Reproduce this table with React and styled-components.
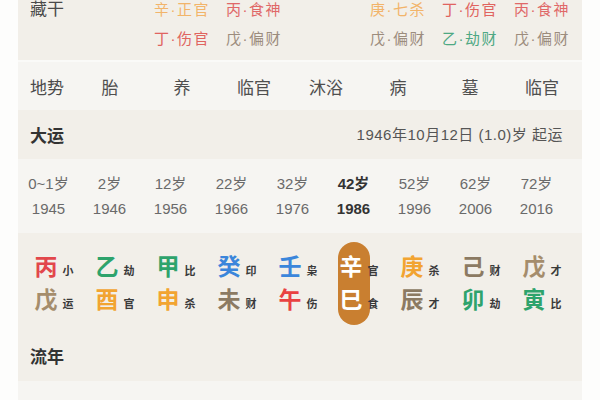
import styled, { createGlobalStyle } from "styled-components";

const GlobalStyle = createGlobalStyle`
  html, body {
    margin: 0;
    padding: 0;
    background: #fdfdfc;
    overflow: hidden;
  }
  body {
    font-family: "Liberation Sans", "Noto Sans CJK SC", sans-serif;
  }
`;

const DARK = "#f2efe9";
const LIGHT = "#f6f5f2";

//藏干（列の順番は地势と同じ）
const hidden = [
  [null, null],
  [
    { t: "辛·正官", c: "#f2b46a" },
    { t: "丁·伤官", c: "#e0645f" },
  ],
  [
    { t: "丙·食神", c: "#e06868" },
    { t: "戊·偏财", c: "#9c8c7d" },
  ],
  [null, null],
  [
    { t: "庚·七杀", c: "#f2b46a" },
    { t: "戊·偏财", c: "#9c8c7d" },
  ],
  [
    { t: "丁·伤官", c: "#e0645f" },
    { t: "乙·劫财", c: "#4ea883" },
  ],
  [
    { t: "丙·食神", c: "#e06868" },
    { t: "戊·偏财", c: "#9c8c7d" },
  ],
];

const terrain = ["胎", "养", "临官", "沐浴", "病", "墓", "临官"];

const dayun = [
  ["0~1岁", "1945"],
  ["2岁", "1946"],
  ["12岁", "1956"],
  ["22岁", "1966"],
  ["32岁", "1976"],
  ["42岁", "1986"],
  ["52岁", "1996"],
  ["62岁", "2006"],
  ["72岁", "2016"],
];

const RED = "#e2474b";
const GREEN = "#2ea36c";
const BLUE = "#3b86db";
const GOLD = "#f2a431";
const EARTH = "#8c7a62";
const SAND = "#a58d6c";

const pillars = [
  [{ g: "丙", s: "小", c: RED }, { g: "戊", s: "运", c: SAND }],
  [{ g: "乙", s: "劫", c: GREEN }, { g: "酉", s: "官", c: GOLD }],
  [{ g: "甲", s: "比", c: GREEN }, { g: "申", s: "杀", c: GOLD }],
  [{ g: "癸", s: "印", c: BLUE }, { g: "未", s: "财", c: EARTH }],
  [{ g: "壬", s: "枭", c: BLUE }, { g: "午", s: "伤", c: "#e94242" }],
  [{ g: "辛", s: "官", c: "#fff" }, { g: "巳", s: "食", c: "#fff" }],
  [{ g: "庚", s: "杀", c: GOLD }, { g: "辰", s: "才", c: EARTH }],
  [{ g: "己", s: "财", c: EARTH }, { g: "卯", s: "劫", c: GREEN }],
  [{ g: "戊", s: "才", c: SAND }, { g: "寅", s: "比", c: GREEN }],
];

const liunian = ["1986", "1987", "1988", "1989", "1990", "1991", "1992", "1993", "1994"];

const ACTIVE = 5;

export default function App() {
  return (
    <>
      <GlobalStyle />
      <Panel>
        {/* 藏干 */}
        <Section $tone="dark" $pad="0 0 11px" $line>
          {[0, 1].map((row) => (
            <HiddenRow key={row}>
              <RowLabel>{row === 0 ? "藏干" : ""}</RowLabel>
              {hidden.map((col, i) => (
                <HiddenCell key={i} $color={col[row] ? col[row].c : "inherit"}>
                  {col[row] ? col[row].t : ""}
                </HiddenCell>
              ))}
            </HiddenRow>
          ))}
        </Section>

        {/* 地势 */}
        <Section $tone="light">
          <TerrainRow>
            <RowLabel>地势</RowLabel>
            {terrain.map((t, i) => (
              <TerrainCell key={i}>{t}</TerrainCell>
            ))}
          </TerrainRow>
        </Section>

        {/* 大运 */}
        <Header>
          <HeaderTitle>大运</HeaderTitle>
          <HeaderNote>1946年10月12日 (1.0)岁 起运</HeaderNote>
        </Header>

        <Section $tone="light" $pad="12px 0 12px">
          <DayunGrid>
            {dayun.map(([age, year], i) => (
              <DayunCell key={i} $active={i === ACTIVE}>
                <span>{age}</span>
                <span>{year}</span>
              </DayunCell>
            ))}
          </DayunGrid>
        </Section>

        <Section $tone="dark" $pad="9px 0 4px">
          <PillarGrid>
            {pillars.map((col, i) => (
              <PillarCol key={i}>
                <Pill $active={i === ACTIVE}>
                  {col.map((p, j) => (
                    <Glyph key={j}>
                      <Main $color={p.c}>{p.g}</Main>
                      <Sub>{p.s}</Sub>
                    </Glyph>
                  ))}
                </Pill>
              </PillarCol>
            ))}
          </PillarGrid>
        </Section>

        {/* 流年 */}
        <Header $height="52px">
          <HeaderTitle>流年</HeaderTitle>
        </Header>

        <Section $tone="light" $pad="13px 0 12px">
          <DayunGrid>
            {liunian.map((y, i) => (
              <DayunCell key={i}>
                <span>{y}</span>
              </DayunCell>
            ))}
          </DayunGrid>
        </Section>
      </Panel>
    </>
  );
}

const Panel = styled.div`
  width: 564px;
  margin: 0 18px;
  height: 400px;
  overflow: hidden;
`;

const Section = styled.section`
  background: ${(p) => (p.$tone === "dark" ? DARK : LIGHT)};
  padding: ${(p) => p.$pad || "0"};
  border-bottom: ${(p) => (p.$line ? "2px solid #fafaf8" : "none")};
`;

const HiddenRow = styled.div`
  display: grid;
  grid-template-columns: 56px repeat(7, 72px);
  align-items: center;
  height: 20px;
  line-height: 20px;
  & + & {
    margin-top: 9px;
  }
`;

const RowLabel = styled.div`
  padding-left: 12px;
  font-size: 17px;
  color: #4a4a4a;
  white-space: nowrap;
`;

const HiddenCell = styled.div`
  text-align: center;
  font-size: 15px;
  letter-spacing: 1.5px;
  color: ${(p) => p.$color};
  white-space: nowrap;
`;

const TerrainRow = styled.div`
  display: grid;
  grid-template-columns: 56px repeat(7, 72px);
  align-items: center;
  height: 48px;
`;

const TerrainCell = styled.div`
  text-align: center;
  font-size: 17px;
  color: #4f4f4f;
`;

const Header = styled.div`
  display: flex;
  align-items: center;
  justify-content: space-between;
  height: ${(p) => p.$height || "49px"};
  padding: 0 19px 0 12px;
  background: ${DARK};
`;

const HeaderTitle = styled.h3`
  margin: 0;
  font-size: 17px;
  font-weight: bold;
  color: #333;
`;

const HeaderNote = styled.span`
  font-size: 15px;
  letter-spacing: 0.5px;
  color: #555;
  margin-top: -2px;
`;

const DayunGrid = styled.div`
  display: grid;
  grid-template-columns: repeat(9, 61px);
`;

const DayunCell = styled.div`
  display: flex;
  flex-direction: column;
  align-items: center;
  line-height: 25px;
  font-size: 15px;
  white-space: nowrap;
  color: ${(p) => (p.$active ? "#333" : "#6a6a6a")};
  font-weight: ${(p) => (p.$active ? "bold" : "normal")};
`;

const PillarGrid = styled.div`
  display: grid;
  grid-template-columns: repeat(9, 61px);
`;

const PillarCol = styled.div`
  display: flex;
  justify-content: center;
`;

const Pill = styled.div`
  width: 32px;
  padding: 7px 0 10px;
  border-radius: 16px;
  background: ${(p) => (p.$active ? "#c97f30" : "transparent")};
`;

const Glyph = styled.div`
  display: flex;
  justify-content: center;
  align-items: baseline;
  height: 33px;
  line-height: 33px;
`;

const Main = styled.span`
  font-family: "Noto Sans CJK SC", sans-serif;
  font-size: 23px;
  font-weight: bold;
  color: ${(p) => p.$color};
`;

//幅0にして本体の字を列の中央に置く
const Sub = styled.span`
  width: 0;
  margin-left: 5px;
  overflow: visible;
  white-space: nowrap;
  font-family: "Noto Sans CJK SC", sans-serif;
  font-size: 11px;
  font-weight: bold;
  color: #3a3a3a;
`;
